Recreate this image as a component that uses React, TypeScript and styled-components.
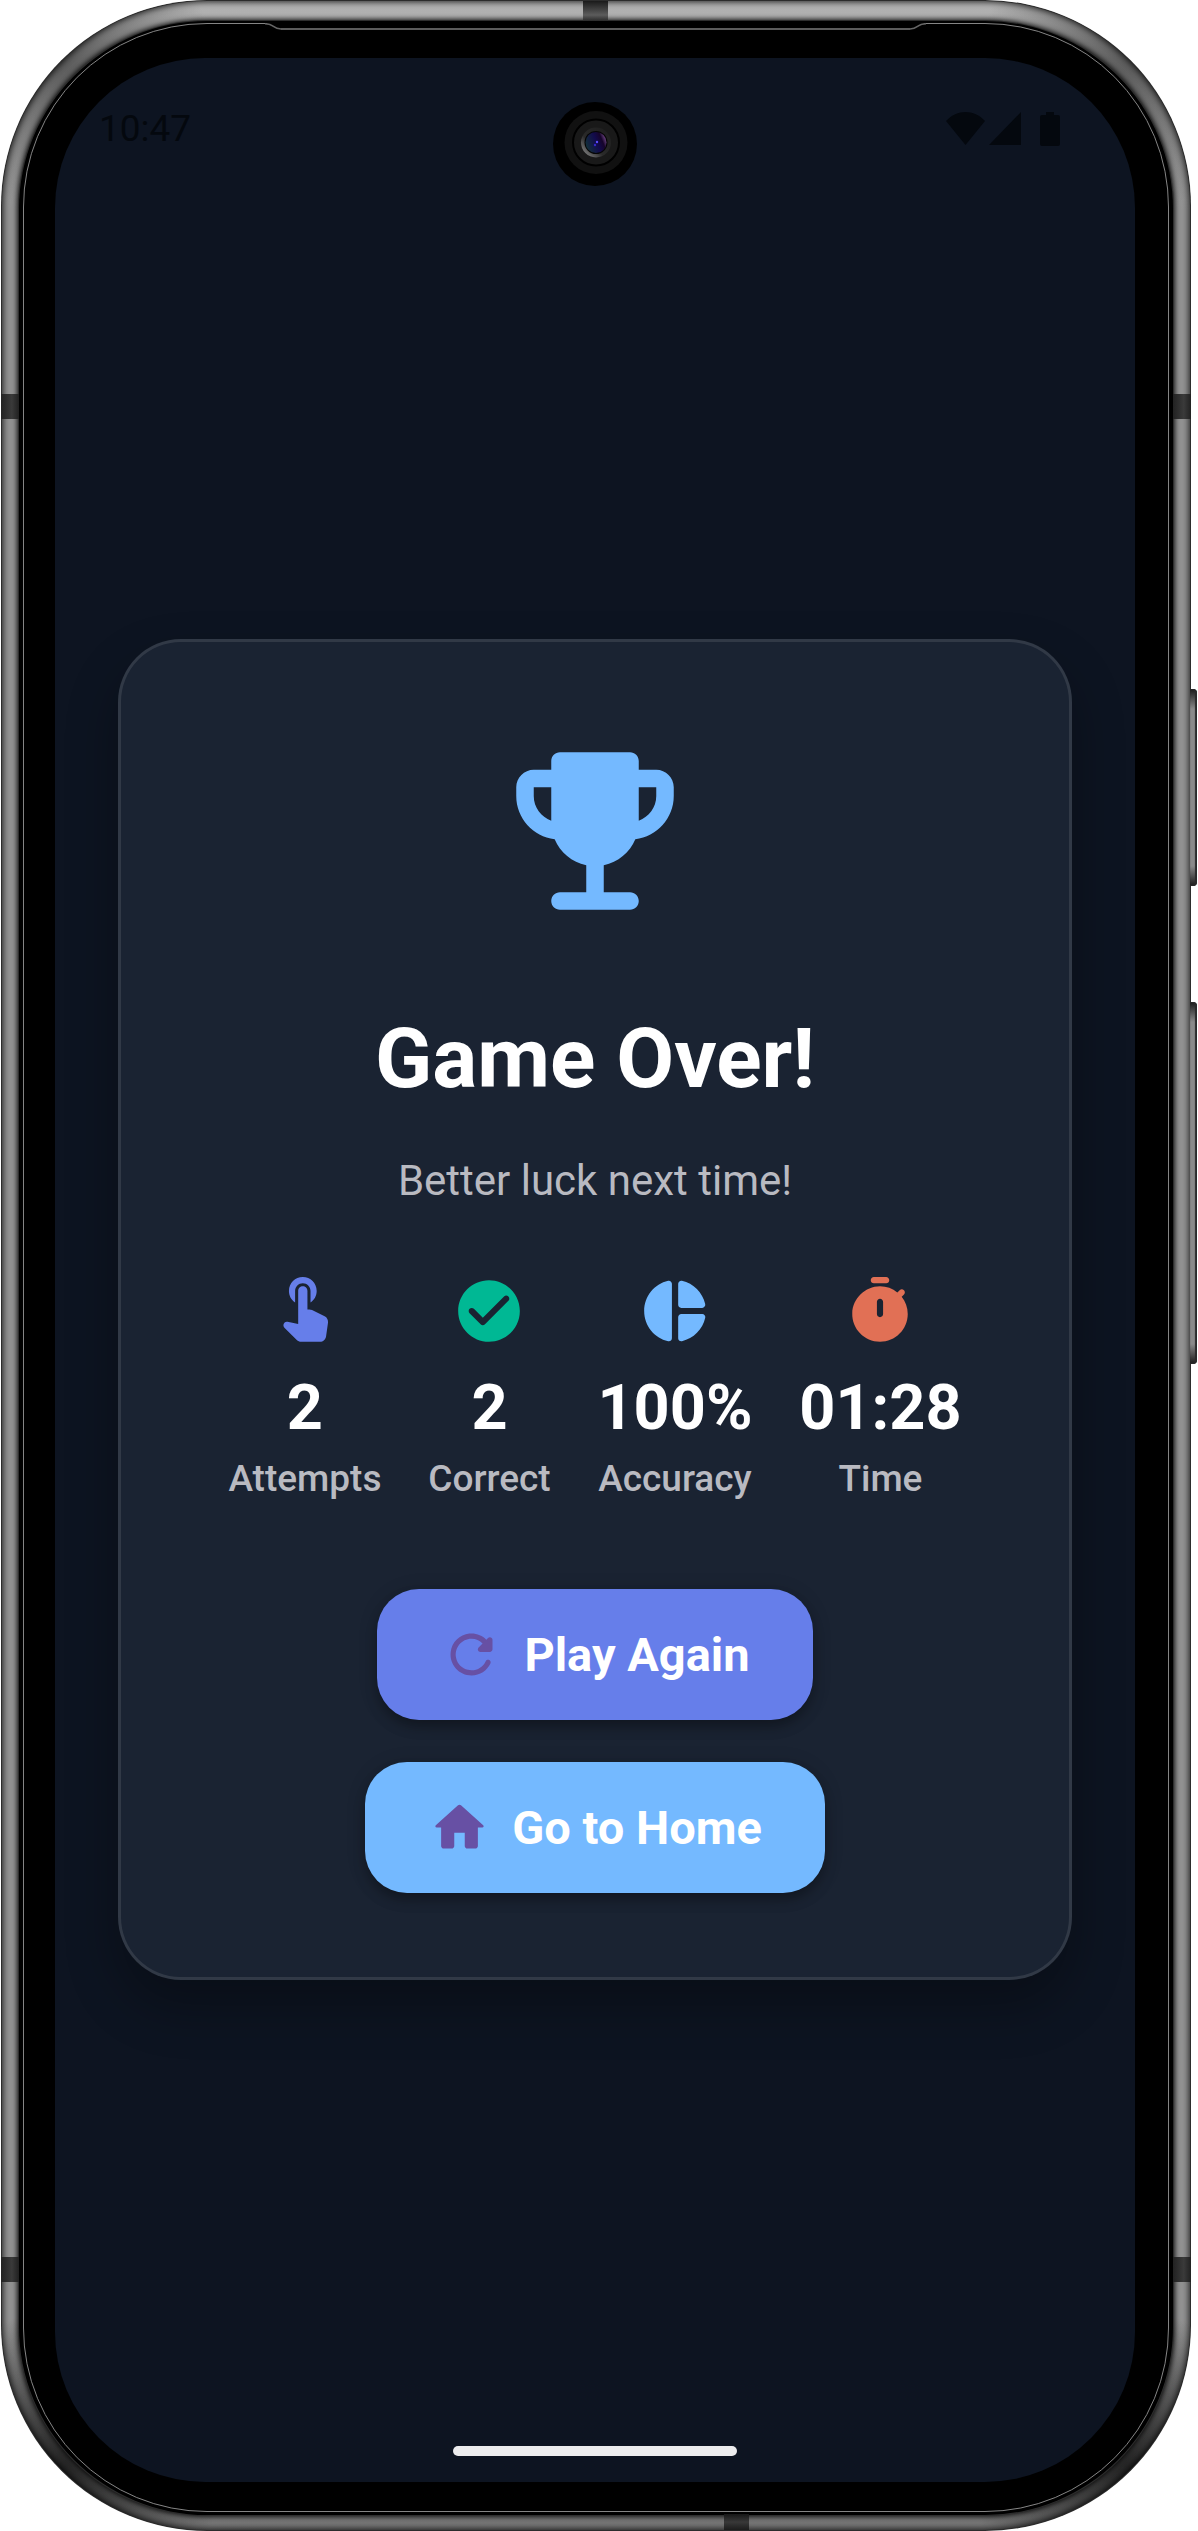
import React from "react";
import styled, { createGlobalStyle } from "styled-components";

const GlobalStyle = createGlobalStyle`
  *, *::before, *::after { box-sizing: border-box; }
  body {
    margin: 0;
    background: #ffffff;
    font-family: Roboto, "Noto Sans", sans-serif;
  }
`;

const metal = "linear-gradient(#b2b2b2 0, #929292 210px, #929292 calc(100% - 210px), #757575 100%)";

const Phone = styled.div`
  position: relative;
  display: flex;
  min-height: 100vh;
  margin: 0 7px 0 1px;
  padding: 21px 18px 16px;
  border-radius: 206px;
  background:
    radial-gradient(circle at 60px 60px, rgba(70, 70, 70, 0.8), transparent 150px),
    radial-gradient(circle at calc(100% - 60px) 60px, rgba(70, 70, 70, 0.8), transparent 150px),
    radial-gradient(circle at 60px calc(100% - 60px), rgba(34, 34, 34, 1), transparent 160px),
    radial-gradient(circle at calc(100% - 60px) calc(100% - 60px), rgba(34, 34, 34, 1), transparent 160px),
    ${metal};
  box-shadow:
    inset 0 0 0 1px #2c2c2c,
    inset 0 0 6px 2px rgba(0, 0, 0, 0.8);
`;

const SideKey = styled.span<{ $top: number; $length: number }>`
  position: absolute;
  top: ${(p) => p.$top}px;
  right: -6px;
  width: 7px;
  height: ${(p) => p.$length}px;
  border-radius: 0 4px 4px 0;
  background: linear-gradient(#1a1a1a, #8a8a8a 20px, #8a8a8a calc(100% - 20px), #1a1a1a);
  box-shadow: inset -1px 0 1px 1px #2a2a2a;
`;

const Band = styled.span<{ $edge: "left" | "right"; $from: "top" | "bottom" }>`
  position: absolute;
  ${(p) => p.$edge}: 0;
  ${(p) => (p.$from === "top" ? "top: 394px;" : "bottom: 249px;")}
  width: 18px;
  height: 25px;
  background: linear-gradient(90deg, #222222, #3a3a3a 60%, #202020);
`;

const EndBand = styled.span<{ $from: "top" | "bottom" }>`
  position: absolute;
  ${(p) => (p.$from === "top" ? "top: 1px; left: calc(50% - 13px);" : "bottom: 1px; right: 442px;")}
  width: 25px;
  height: ${(p) => (p.$from === "top" ? 20 : 16)}px;
  background: ${(p) =>
    p.$from === "top"
      ? "linear-gradient(#1a1a1a, #5c5c5c 70%, #2a2a2a)"
      : "linear-gradient(#161616, #383838 50%, #1c1c1c)"};
`;

const Glass = styled.div`
  display: flex;
  flex: 1;
  padding: 2px 4px 3px;
  border-radius: 188px;
  background: #000000;
  box-shadow:
    0 0 0 1px #2e2e2e,
    0 0 5px 2px rgba(0, 0, 0, 0.85);
`;

const Bezel = styled.div`
  position: relative;
  display: flex;
  flex: 1;
  padding: 34px 33px 29px 31px;
  border: 1px solid #858585;
  border-radius: 184px;
`;

const Speaker = styled.div`
  position: absolute;
  top: -1px;
  left: 241px;
  right: 242px;
  display: flex;
  height: 8px;
  background: #000000;
`;

const SpeakerLine = styled.div`
  flex: 1;
  height: 7px;
  border-bottom: 2px solid #5c5c5c;
`;

const Screen = styled.div`
  position: relative;
  display: flex;
  flex: 1;
  flex-direction: column;
  min-width: 0;
  border-radius: 150px;
  background: #0d1421;
  overflow: hidden;
`;

const Camera = styled.svg`
  position: absolute;
  top: 44px;
  left: calc(50% - 42px);
`;

const StatusBar = styled.header`
  display: flex;
  align-items: center;
  justify-content: space-between;
  height: 142px;
  padding: 0 75px 0 44px;
  color: #04080e;
`;

const Clock = styled.time`
  font-size: 37px;
  line-height: 44px;
`;

const StatusIcons = styled.div`
  display: flex;
  align-items: center;
  gap: 4px;
`;

const Main = styled.main`
  display: flex;
  flex: 1;
  align-items: center;
  padding: 0 63px;
`;

const Card = styled.section`
  display: flex;
  flex: 1;
  flex-direction: column;
  align-items: center;
  min-width: 0;
  padding: 84px;
  border: 3px solid rgba(255, 255, 255, 0.1);
  border-radius: 63px;
  background: #1a2332;
  box-shadow: 0 26px 52px rgba(0, 0, 0, 0.3);
`;

const Icon = styled.svg<{ $size: number }>`
  display: block;
  flex: none;
  width: ${(p) => p.$size}px;
  height: ${(p) => p.$size}px;
  fill: currentColor;
`;

const Title = styled.h1`
  margin: 63px 0 0;
  color: #ffffff;
  font-size: 84px;
  font-weight: 700;
  line-height: 120px;
`;

const Subtitle = styled.p`
  margin: 32px 0 0;
  color: #b9bac1;
  font-size: 42px;
  line-height: 60px;
`;

const Stats = styled.ul`
  display: flex;
  align-self: stretch;
  justify-content: space-around;
  margin: 63px 0 0;
  padding: 0;
  list-style: none;
`;

const Stat = styled.li<{ $color: string }>`
  display: flex;
  flex-direction: column;
  align-items: center;
  color: ${(p) => p.$color};
`;

const StatValue = styled.strong`
  margin-top: 15px;
  color: #ffffff;
  font-size: 63px;
  font-weight: 700;
  line-height: 90px;
`;

const StatLabel = styled.span`
  color: #b9bac1;
  font-size: 37px;
  font-weight: 500;
  line-height: 52px;
`;

const Actions = styled.div`
  display: flex;
  flex-direction: column;
  align-items: center;
  gap: 42px;
  margin-top: 84px;
`;

const ActionButton = styled.button<{ $fill: string }>`
  display: flex;
  align-items: center;
  gap: 21px;
  height: 131px;
  padding: 0 63px;
  border: 0;
  border-radius: 42px;
  background: ${(p) => p.$fill};
  box-shadow:
    0 8px 14px -2px rgba(0, 0, 0, 0.3),
    0 2px 20px rgba(0, 0, 0, 0.14);
  color: #6750a4;
  font-family: inherit;
  font-size: 47px;
  font-weight: 700;
  line-height: 67px;
  cursor: pointer;
`;

const ActionText = styled.span`
  color: #ffffff;
`;

const NavBar = styled.footer`
  display: flex;
  align-items: center;
  justify-content: center;
  height: 63px;
`;

const Handle = styled.span`
  width: 284px;
  height: 10px;
  border-radius: 5px;
  background: #ececee;
`;

const paths = {
  trophy:
    "M19 5h-2V4c0-.55-.45-1-1-1H8c-.55 0-1 .45-1 1v1H5c-1.1 0-2 .9-2 2v1c0 2.55 1.92 4.63 4.39 4.94.63 1.5 1.98 2.63 3.61 2.96V19H8c-.55 0-1 .45-1 1s.45 1 1 1h8c.55 0 1-.45 1-1s-.45-1-1-1h-3v-3.1c1.63-.33 2.98-1.46 3.61-2.96C19.08 12.63 21 10.55 21 8V7c0-1.1-.9-2-2-2zM5 8V7h2v3.82C5.84 10.4 5 9.3 5 8zm14 0c0 1.3-.84 2.4-2 2.82V7h2v1z",
  touch:
    "M8.79 9.24V5.5c0-1.38 1.12-2.5 2.5-2.5s2.5 1.12 2.5 2.5v3.74c1.21-.81 2-2.18 2-3.74 0-2.49-2.01-4.5-4.5-4.5s-4.5 2.01-4.5 4.5c0 1.56.79 2.93 2 3.74zm5.5 2.47c-.28-.14-.58-.21-.89-.21h-.61v-6c0-.83-.67-1.5-1.5-1.5s-1.5.67-1.5 1.5v10.74l-3.44-.72c-.37-.08-.76.04-1.03.31-.43.44-.43 1.14 0 1.58l4.01 4.01c.38.37.89.58 1.42.58h6.1c1 0 1.84-.73 1.98-1.72l.63-4.47c.12-.85-.32-1.69-1.09-2.07l-4.08-2.03z",
  check:
    "M12 2C6.48 2 2 6.48 2 12s4.48 10 10 10 10-4.48 10-10S17.52 2 12 2zM9.29 16.29L5.7 12.7c-.39-.39-.39-1.02 0-1.41.39-.39 1.02-.39 1.41 0L10 14.17l6.88-6.88c.39-.39 1.02-.39 1.41 0 .39.39.39 1.02 0 1.41l-7.59 7.59c-.38.39-1.02.39-1.41 0z",
  pie:
    "M11 3.18v17.64c0 .64-.59 1.12-1.21.98C5.32 20.8 2 16.79 2 12s3.32-8.8 7.79-9.8c.62-.14 1.21.34 1.21.98zm2.03 0v6.81c0 .55.45 1 1 1h6.79c.64 0 1.12-.59.98-1.22-.85-3.76-3.8-6.72-7.55-7.57-.63-.14-1.22.34-1.22.98zm0 10.83v6.81c0 .64.59 1.12 1.22.98 3.76-.85 6.71-3.82 7.56-7.58.14-.62-.35-1.22-.98-1.22h-6.79c-.56.01-1.01.46-1.01 1.01z",
  timer:
    "M14 1h-4c-.55 0-1 .45-1 1s.45 1 1 1h4c.55 0 1-.45 1-1s-.45-1-1-1zm5.03 6.39l.75-.75c.38-.38.39-1.01 0-1.4l-.01-.01c-.39-.39-1.01-.38-1.4 0l-.75.75C16.07 4.74 14.12 4 12 4c-4.8 0-8.88 3.96-9 8.76C2.87 17.84 6.94 22 12 22c4.98 0 9-4.03 9-9 0-2.12-.74-4.07-1.97-5.61zM13 13c0 .55-.45 1-1 1s-1-.45-1-1V9c0-.55.45-1 1-1s1 .45 1 1v4z",
  refresh:
    "M17.65 6.35c-1.63-1.63-3.94-2.57-6.48-2.31-3.67.37-6.69 3.35-7.1 7.02C3.52 15.91 7.27 20 12 20c3.19 0 5.93-1.87 7.21-4.56.32-.67-.16-1.44-.9-1.44-.37 0-.72.2-.88.53-1.13 2.43-3.84 3.97-6.8 3.31-2.22-.49-4.01-2.3-4.48-4.52C5.31 9.44 8.26 6 12 6c1.66 0 3.14.69 4.22 1.78l-1.51 1.51c-.63.63-.19 1.71.7 1.71H19c.55 0 1-.45 1-1V6.41c0-.89-1.08-1.34-1.71-.71l-.64.65z",
  home:
    "M10 19v-5h4v5c0 .55.45 1 1 1h3c.55 0 1-.45 1-1v-7h1.7c.46 0 .68-.57.33-.87L12.67 3.6c-.38-.34-.96-.34-1.34 0l-8.36 7.53c-.34.3-.13.87.33.87H5v7c0 .55.45 1 1 1h3c.55 0 1-.45 1-1z",
};

type IconName = keyof typeof paths;

function Glyph({ name, size }: { name: IconName; size: number }) {
  return (
    <Icon $size={size} viewBox="0 0 24 24" aria-hidden="true">
      <path d={paths[name]} />
    </Icon>
  );
}

const stats: { icon: IconName; color: string; value: string; label: string }[] = [
  { icon: "touch", color: "#667eea", value: "2", label: "Attempts" },
  { icon: "check", color: "#00b894", value: "2", label: "Correct" },
  { icon: "pie", color: "#74b9ff", value: "100%", label: "Accuracy" },
  { icon: "timer", color: "#e17055", value: "01:28", label: "Time" },
];

const TrophyWrap = styled.div`
  color: #74b9ff;
`;

function FrontCamera() {
  return (
    <Camera width="84" height="84" viewBox="0 0 84 84" aria-hidden="true">
      <defs>
        <linearGradient id="lensRim" x1="0" y1="1" x2="1" y2="0">
          <stop offset="0" stopColor="#9a9a9a" />
          <stop offset="0.4" stopColor="#2a2a2a" />
          <stop offset="1" stopColor="#1c1c1c" />
        </linearGradient>
        <linearGradient id="lens" x1="0" y1="0.6" x2="1" y2="0.2">
          <stop offset="0" stopColor="#12303a" />
          <stop offset="0.5" stopColor="#120a4c" />
          <stop offset="0.75" stopColor="#16042a" />
          <stop offset="1" stopColor="#8c5aa2" />
        </linearGradient>
      </defs>
      <circle cx="42" cy="42" r="42" fill="#000000" />
      <circle cx="43" cy="40.500" r="31.500" fill="#111111" />
      <circle cx="43" cy="40.500" r="23" fill="#191919" stroke="#000000" strokeWidth="2" />
      <circle cx="43" cy="40.500" r="15" fill="url(#lensRim)" />
      <circle cx="43" cy="40.500" r="11.500" fill="#050505" />
      <circle cx="43" cy="40.500" r="10.500" fill="url(#lens)" />
      <circle cx="44" cy="40" r="1.200" fill="#5a4cff" />
      <circle cx="42" cy="43" r="1.200" fill="#3426c8" />
    </Camera>
  );
}

export default function App() {
  return (
    <>
      <GlobalStyle />
      <Phone>
        <Band $edge="left" $from="top" />
        <Band $edge="right" $from="top" />
        <Band $edge="left" $from="bottom" />
        <Band $edge="right" $from="bottom" />
        <EndBand $from="top" />
        <EndBand $from="bottom" />
        <SideKey $top={689} $length={197} />
        <SideKey $top={1002} $length={362} />
        <Glass>
          <Bezel>
            <Speaker>
              <svg width="16" height="8" viewBox="0 0 16 8" fill="none" stroke="#666666" strokeWidth="1.500">
                <path d="M0 .7c5 0 6 1 8 2.500S12 6 16 6" />
              </svg>
              <SpeakerLine />
              <svg width="16" height="8" viewBox="0 0 16 8" fill="none" stroke="#666666" strokeWidth="1.500">
                <path d="M16 .7c-5 0-6 1-8 2.500S4 6 0 6" />
              </svg>
            </Speaker>
            <Screen>
              <FrontCamera />
              <StatusBar>
                <Clock>10:47</Clock>
                <StatusIcons>
                  <svg width="39" height="34" viewBox="0 0 39 34" fill="currentColor" role="img" aria-label="Wi-Fi">
                    <path d="M0 9C11-3 28-3 39 9L19.500 33z" />
                  </svg>
                  <svg width="32" height="34" viewBox="0 0 32 34" fill="currentColor" role="img" aria-label="Signal">
                    <path d="M32 0v33H0z" />
                  </svg>
                  <svg width="35" height="34" viewBox="0 0 35 34" fill="currentColor" role="img" aria-label="Battery">
                    <path d="M21 0h8v3h4a2 2 0 0 1 2 2v27a2 2 0 0 1-2 2H17a2 2 0 0 1-2-2V5a2 2 0 0 1 2-2h4z" />
                  </svg>
                </StatusIcons>
              </StatusBar>
              <Main>
                <Card>
                  <TrophyWrap>
                    <Glyph name="trophy" size={210} />
                  </TrophyWrap>
                  <Title>Game Over!</Title>
                  <Subtitle>Better luck next time!</Subtitle>
                  <Stats>
                    {stats.map((s) => (
                      <Stat key={s.label} $color={s.color}>
                        <Glyph name={s.icon} size={74} />
                        <StatValue>{s.value}</StatValue>
                        <StatLabel>{s.label}</StatLabel>
                      </Stat>
                    ))}
                  </Stats>
                  <Actions>
                    <ActionButton type="button" $fill="#667eea">
                      <Glyph name="refresh" size={63} />
                      <ActionText>Play Again</ActionText>
                    </ActionButton>
                    <ActionButton type="button" $fill="#74b9ff">
                      <Glyph name="home" size={63} />
                      <ActionText>Go to Home</ActionText>
                    </ActionButton>
                  </Actions>
                </Card>
              </Main>
              <NavBar>
                <Handle />
              </NavBar>
            </Screen>
          </Bezel>
        </Glass>
      </Phone>
    </>
  );
}
